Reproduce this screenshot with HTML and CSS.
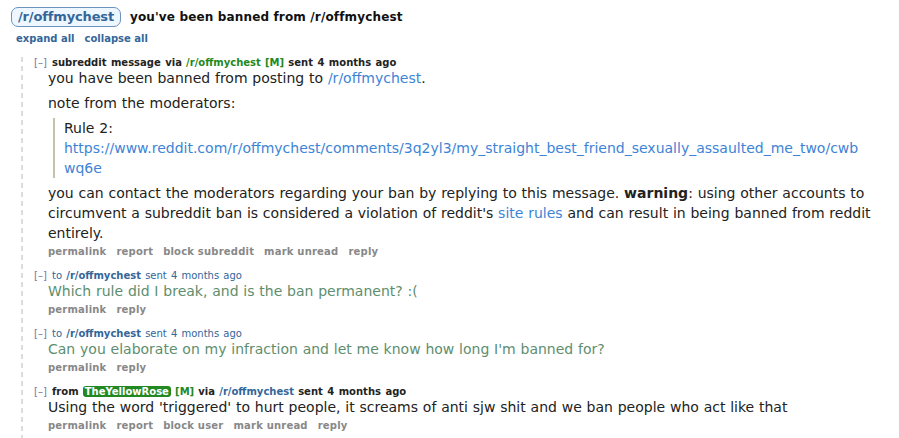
FILE: index.html
```html
<!DOCTYPE html>
<html>
<head>
<meta charset="utf-8">
<link rel="stylesheet" href="styles.css">
</head>
<body>
<div class="header">
  <span class="badge">/r/offmychest</span>
  <span class="subject">you've been banned from /r/offmychest</span>
</div>
<div class="toggles"><a class="toggle">expand all</a><a class="toggle">collapse all</a></div>
<div class="thread">
  <div class="msg">
    <div class="tagline"><span class="expand">[–]</span> <b>subreddit message via</b> <b class="green">/r/offmychest</b> <b class="green">[M]</b> <b>sent 4 months ago</b></div>
    <div class="md">
      <p>you have been banned from posting to <a class="link">/r/offmychest</a>.</p>
      <p>note from the moderators:</p>
      <blockquote class="quote">
        <p>Rule 2:<br><a class="link nowrap">https://www.reddit.com/r/offmychest/comments/3q2yl3/my_straight_best_friend_sexually_assaulted_me_two/cwb</a><br><a class="link">wq6e</a></p>
      </blockquote>
      <p>you can contact the moderators regarding your ban by replying to this message. <strong>warning</strong>: using other accounts to circumvent a subreddit ban is considered a violation of reddit's <a class="link">site rules</a> and can result in being banned from reddit entirely.</p>
    </div>
    <ul class="buttons"><li>permalink</li><li>report</li><li>block subreddit</li><li>mark unread</li><li>reply</li></ul>
  </div>
  <div class="msg">
    <div class="tagline"><span class="expand">[–]</span> <span class="blue">to</span> <b class="blue">/r/offmychest</b> <span class="blue">sent 4 months ago</span></div>
    <div class="md sent"><p>Which rule did I break, and is the ban permanent? :(</p></div>
    <ul class="buttons"><li>permalink</li><li>reply</li></ul>
  </div>
  <div class="msg">
    <div class="tagline"><span class="expand">[–]</span> <span class="blue">to</span> <b class="blue">/r/offmychest</b> <span class="blue">sent 4 months ago</span></div>
    <div class="md sent"><p>Can you elaborate on my infraction and let me know how long I'm banned for?</p></div>
    <ul class="buttons"><li>permalink</li><li>reply</li></ul>
  </div>
  <div class="msg">
    <div class="tagline"><span class="expand">[–]</span> <b>from</b> <b class="modname">TheYellowRose</b> <b class="green">[M]</b> <b>via</b> <b class="blue">/r/offmychest</b> <b>sent 4 months ago</b></div>
    <div class="md"><p>Using the word 'triggered' to hurt people, it screams of anti sjw shit and we ban people who act like that</p></div>
    <ul class="buttons"><li>permalink</li><li>report</li><li>block user</li><li>mark unread</li><li>reply</li></ul>
  </div>
</div>
</body>
</html>
```

FILE: styles.css
```css
html, body {
  margin: 0;
  padding: 0;
  background: #fff;
}
body {
  font-family: "DejaVu Sans", Verdana, sans-serif;
  color: #222;
}
.header {
  display: flex;
  align-items: center;
  gap: 9px;
  padding: 7px 0 0 11px;
  height: 20px;
}
.badge {
  display: inline-block;
  box-sizing: border-box;
  height: 20px;
  line-height: 18px;
  padding: 0 6px;
  border: 1px solid #6b93bd;
  border-radius: 7px;
  background: #eef6ff;
  color: #369;
  font-weight: bold;
  font-size: 13px;
  letter-spacing: -0.15px;
}
.subject {
  font-weight: bold;
  font-size: 12px;
  letter-spacing: 0.15px;
  color: #111;
}
.toggles {
  display: flex;
  gap: 10px;
  padding-left: 16px;
  margin-top: 6px;
  line-height: 12px;
  font-size: 10px;
  font-weight: bold;
}
.toggle { color: #369; }
.thread {
  margin-top: 12px;
  padding-left: 34px;
  background-image: repeating-linear-gradient(to bottom, #dcdcdc 0 5px, transparent 5px 9px);
  background-size: 2px 100%;
  background-repeat: no-repeat;
  background-position: 21px 0;
}
.msg {
  padding-bottom: 11px;
}
.tagline {
  font-size: 10px;
  line-height: 12px;
  word-spacing: 1px;
  color: #222;
}
.expand { color: #7474aa; margin-right: 1px; }
.green { color: #228822; }
.blue { color: #369; }
.modname {
  background: #228822;
  color: #fff;
  padding: 0 2px;
  border-radius: 3px;
  word-spacing: 0;
}
.md {
  margin: -1px 0 0 14px;
  width: 830px;
  font-size: 14px;
  line-height: 20px;
  word-spacing: 0.35px;
  color: #222;
}
.md.sent { color: #5e8e6e; }
.md p { margin: 0; }
.md p + p, .md p + .quote, .md .quote + p { margin-top: 5px; }
.quote {
  margin: 0 0 0 5px;
  padding: 0 8px 0 9px;
  border-left: 2px solid #c5c1ad;
}
.link { color: #3d84d6; }
.nowrap { white-space: nowrap; }
.buttons {
  list-style: none;
  display: flex;
  gap: 10px;
  margin: 2px 0 0 14px;
  padding: 0;
  font-size: 10px;
  line-height: 14px;
  font-weight: bold;
  letter-spacing: 0.2px;
  color: #888;
}
```
